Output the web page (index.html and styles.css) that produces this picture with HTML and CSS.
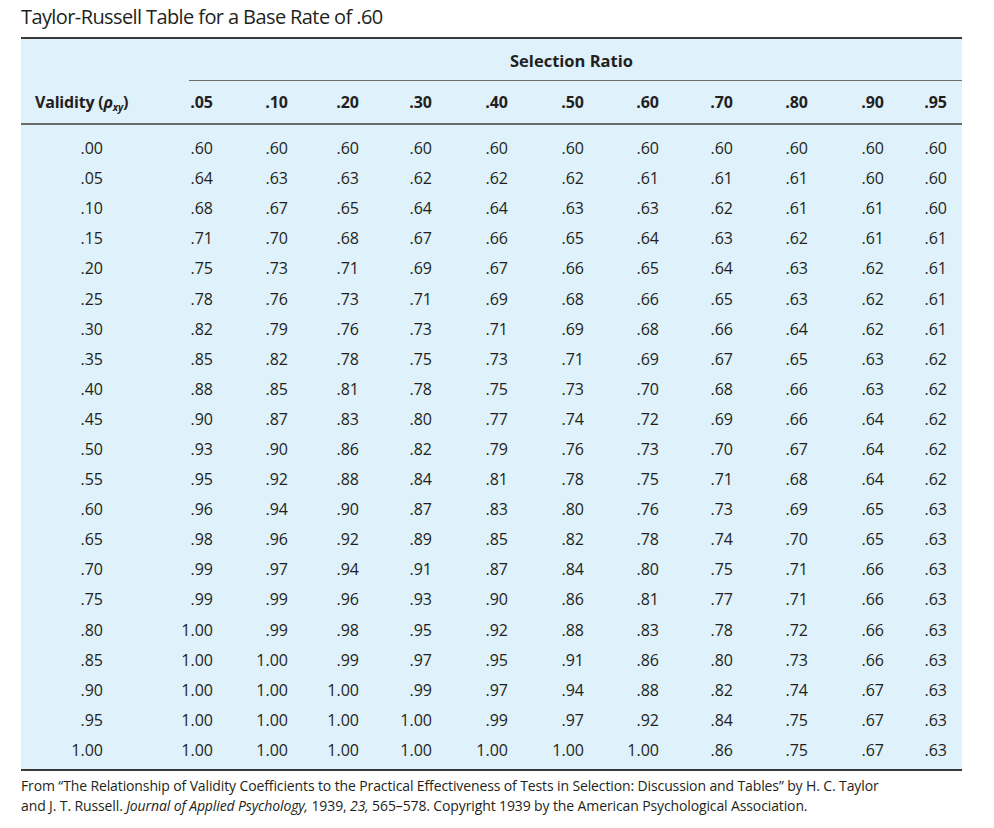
FILE: index.html
```html
<!DOCTYPE html>
<html lang="en">
<head>
<meta charset="utf-8">
<title>Taylor-Russell Table</title>
<link rel="stylesheet" href="styles.css">
</head>
<body>
<div class="page">
  <h1 class="title">Taylor-Russell Table for a Base Rate of .60</h1>
  <div class="table">
    <div class="sr-row"><div class="sr-label">Selection Ratio</div></div>
    <div class="grid head">
      <div class="c first">Validity (<i>ρ<sub>xy</sub></i>)</div>
      <div class="c">.05</div><div class="c">.10</div><div class="c">.20</div><div class="c">.30</div><div class="c">.40</div><div class="c">.50</div><div class="c">.60</div><div class="c">.70</div><div class="c">.80</div><div class="c">.90</div><div class="c">.95</div>
    </div>
    <div class="body" id="body"></div>
  </div>
  <p class="note">From “The Relationship of Validity Coefficients to the Practical Effectiveness of Tests in Selection: Discussion and Tables” by H. C. Taylor<br>and J. T. Russell. <i>Journal of Applied Psychology,</i> 1939, <i>23,</i> 565–578. Copyright 1939 by the American Psychological Association.</p>
</div>
<script src="script.js"></script>
</body>
</html>
```

FILE: script.js
```js
var rows = [
[".00",".60",".60",".60",".60",".60",".60",".60",".60",".60",".60",".60"],
[".05",".64",".63",".63",".62",".62",".62",".61",".61",".61",".60",".60"],
[".10",".68",".67",".65",".64",".64",".63",".63",".62",".61",".61",".60"],
[".15",".71",".70",".68",".67",".66",".65",".64",".63",".62",".61",".61"],
[".20",".75",".73",".71",".69",".67",".66",".65",".64",".63",".62",".61"],
[".25",".78",".76",".73",".71",".69",".68",".66",".65",".63",".62",".61"],
[".30",".82",".79",".76",".73",".71",".69",".68",".66",".64",".62",".61"],
[".35",".85",".82",".78",".75",".73",".71",".69",".67",".65",".63",".62"],
[".40",".88",".85",".81",".78",".75",".73",".70",".68",".66",".63",".62"],
[".45",".90",".87",".83",".80",".77",".74",".72",".69",".66",".64",".62"],
[".50",".93",".90",".86",".82",".79",".76",".73",".70",".67",".64",".62"],
[".55",".95",".92",".88",".84",".81",".78",".75",".71",".68",".64",".62"],
[".60",".96",".94",".90",".87",".83",".80",".76",".73",".69",".65",".63"],
[".65",".98",".96",".92",".89",".85",".82",".78",".74",".70",".65",".63"],
[".70",".99",".97",".94",".91",".87",".84",".80",".75",".71",".66",".63"],
[".75",".99",".99",".96",".93",".90",".86",".81",".77",".71",".66",".63"],
[".80","1.00",".99",".98",".95",".92",".88",".83",".78",".72",".66",".63"],
[".85","1.00","1.00",".99",".97",".95",".91",".86",".80",".73",".66",".63"],
[".90","1.00","1.00","1.00",".99",".97",".94",".88",".82",".74",".67",".63"],
[".95","1.00","1.00","1.00","1.00",".99",".97",".92",".84",".75",".67",".63"],
["1.00","1.00","1.00","1.00","1.00","1.00","1.00","1.00",".86",".75",".67",".63"]
];
var body = document.getElementById("body");
rows.forEach(function (r) {
  var row = document.createElement("div");
  row.className = "grid row";
  r.forEach(function (v, i) {
    var c = document.createElement("div");
    c.className = i === 0 ? "c first" : "c";
    c.textContent = v;
    row.appendChild(c);
  });
  body.appendChild(row);
});
```

FILE: styles.css
```css
html, body {
  margin: 0;
  padding: 0;
  background: #ffffff;
}
.page {
  width: 941px;
  margin-left: 21px;
  color: #231f20;
  font-family: "Open Sans", "Noto Sans", sans-serif;
}
.title {
  margin: 0;
  height: 37px;
  font-size: 20px;
  font-weight: 400;
  line-height: 33px;
  letter-spacing: -0.6px;
}
.table {
  background: #dff1fb;
  border-top: 2px solid #3b3b3b;
  border-bottom: 2px solid #3b3b3b;
}
.sr-row {
  height: 41px;
  margin-left: 168px;
  border-bottom: 1px solid #6b6b6b;
  display: flex;
  align-items: center;
  justify-content: center;
}
.sr-label {
  font-size: 16.5px;
  font-weight: 700;
  letter-spacing: 0;
  padding-top: 1px;
  padding-right: 8px;
}
.grid {
  display: grid;
  grid-template-columns: 82px 110px 75px 71px 73px 76px 76px 75px 74px 75px 76px 63px;
}
.c {
  text-align: right;
  white-space: nowrap;
}
.head {
  height: 42px;
  align-items: center;
  font-size: 16px;
  font-weight: 700;
  letter-spacing: 0;
  border-bottom: 2px solid #6b6b6b;
}
.head .first {
  text-align: left;
  padding-left: 14px;
  width: 130px;
  letter-spacing: -0.2px;
}
.head sub {
  font-size: 10px;
  vertical-align: -3px;
  line-height: 0;
}
.body {
  padding: 8px 0 4px;
}
.row {
  height: 30.1px;
  align-items: center;
  font-size: 16px;
  letter-spacing: 0;
}
.note {
  margin: 5px 0 0;
  font-size: 14px;
  line-height: 20px;
  letter-spacing: -0.12px;
}
```
